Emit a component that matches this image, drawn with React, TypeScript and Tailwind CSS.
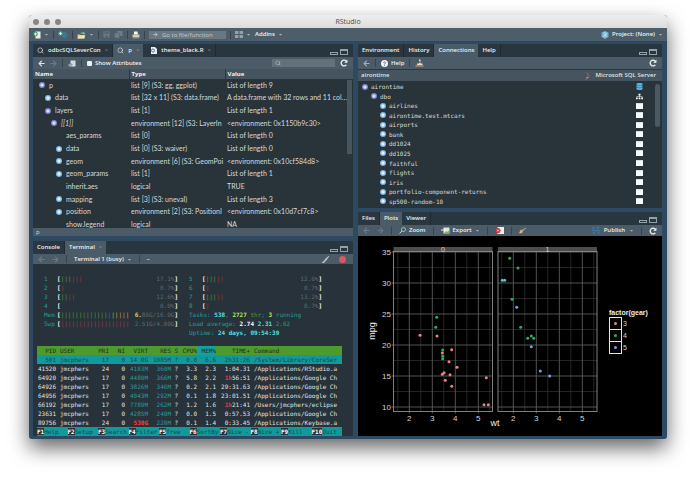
import React from "react";
import { FaArrowLeft, FaArrowRight, FaBroom, FaCaretDown, FaDatabase, FaSitemap } from "react-icons/fa";
import { FiSearch } from "react-icons/fi";

type ObjectRow = { name: string; level: number; type: string; value: string; icon?: "open" | "closed"; italic?: boolean };

const objectRows: ObjectRow[] = [
  { name: "p", level: 0, type: "list [9] (S3: gg, ggplot)", value: "List of length 9", icon: "open" },
  { name: "data", level: 1, type: "list [32 x 11] (S3: data.frame)", value: "A data.frame with 32 rows and 11 col…", icon: "closed" },
  { name: "layers", level: 1, type: "list [1]", value: "List of length 1", icon: "open" },
  { name: "[[1]]", level: 2, type: "environment [12] (S3: LayerIn", value: "<environment: 0x1150b9c30>", icon: "open", italic: true },
  { name: "aes_params", level: 3, type: "list [0]", value: "List of length 0" },
  { name: "data", level: 3, type: "list [0] (S3: waiver)", value: "List of length 0", icon: "closed" },
  { name: "geom", level: 3, type: "environment [6] (S3: GeomPoi", value: "<environment: 0x10cf584d8>", icon: "closed" },
  { name: "geom_params", level: 3, type: "list [1]", value: "List of length 1", icon: "closed" },
  { name: "inherit.aes", level: 3, type: "logical", value: "TRUE" },
  { name: "mapping", level: 3, type: "list [3] (S3: uneval)", value: "List of length 3", icon: "closed" },
  { name: "position", level: 3, type: "environment [2] (S3: PositionI", value: "<environment: 0x10d7cf7c8>", icon: "closed" },
  { name: "show.legend", level: 3, type: "logical", value: "NA" },
];

const indents = ["pl-[6px]", "pl-[12px]", "pl-[18px]", "pl-[23px]"];

const tables = [
  "airlines", "airontime.test.mtcars", "airports", "bank", "dd1024", "dd1025",
  "faithful", "flights", "iris", "portfolio-component-returns", "sp500-random-10",
];

const processes = [
  ["41520", "24", "4183M", "360M", "3.3", "2.3", "", "1:04.31", "/Applications/RStudio.a"],
  ["64920", "17", "4480M", "366M", "5.8", "2.2", "1h", "56:51", "/Applications/Google Ch"],
  ["64926", "17", "3826M", "346M", "0.2", "2.1", "", "29:31.63", "/Applications/Google Ch"],
  ["64956", "17", "4043M", "292M", "0.1", "1.8", "", "23:01.51", "/Applications/Google Ch"],
  ["66192", "17", "7789M", "262M", "1.2", "1.6", "1h", "21:41", "/Users/jmcphers/eclipse"],
  ["23631", "17", "4285M", "240M", "0.0", "1.5", "", "0:57.53", "/Applications/Google Ch"],
  ["89756", "24", "530G", "228M", "0.1", "1.4", "", "0:33.45", "/Applications/Keybase.a"],
];

const fkeys = [
  ["F1", "Help"], ["F2", "Setup"], ["F3", "Search"], ["F4", "Filter"], ["F5", "Tree"],
  ["F6", "SortBy"], ["F7", "Nice -"], ["F8", "Nice +"], ["F9", "Kill"], ["F10", "Quit"],
];

const RED = "#f08080";
const GREEN = "#2fae5f";
const BLUE = "#7f9bea";
const TEAL = "#5fc3c6";

const points: [number, number, string][] = [
  [62, 99.3, RED], [79, 100, RED], [93.7, 113.7, RED], [84.7, 114, GREEN], [84.3, 117, RED],
  [84.7, 120.3, GREEN], [84.7, 122.7, GREEN], [91, 125.7, RED], [99, 131.3, RED], [84.3, 138.3, RED],
  [86, 136.7, RED], [92, 138.7, RED], [87.3, 144.3, RED], [93.7, 150.3, RED], [128.3, 141.7, RED],
  [126, 168.7, RED], [130.3, 168.7, RED], [78.7, 81.3, GREEN], [77.7, 91.3, GREEN],
  [151.7, 22.3, GREEN], [160, 32, GREEN], [154, 63.3, GREEN], [162.7, 91.3, GREEN],
  [169.7, 102.3, GREEN], [173.3, 100, GREEN], [175.7, 102.3, GREEN], [144.3, 44.3, TEAL],
  [146.7, 44.3, TEAL], [158.7, 71.3, BLUE], [173.3, 110.7, BLUE], [182.3, 135, BLUE], [191.7, 140, BLUE],
];

function Sep() {
  return <span className="h-[8px] w-px shrink-0 bg-[#35434e]" />;
}

function Caret() {
  return <FaCaretDown className="size-[5px] shrink-0 text-[#aab5bb]" />;
}

function Disclosure({ open }: { open: boolean }) {
  return (
    <svg viewBox="0 0 12 12" className="size-[6px] shrink-0">
      <circle cx="6" cy="6" r="6" fill={open ? "#7b86cf" : "#7fb4dc"} />
      <circle cx="6" cy="6" r="4" fill={open ? "#a9b1e6" : "#b5d8ef"} />
      <path d={open ? "M3 5h6L6 9z" : "M5 3v6l4-3z"} fill="#fff" />
    </svg>
  );
}

function Refresh() {
  return (
    <button aria-label="Refresh" className="shrink-0">
      <svg viewBox="0 0 14 14" className="size-[8px]" fill="none" stroke="#edf0f1" strokeWidth="2.4">
        <path d="M11 10.2A5 5 0 1 1 10.6 3.5" />
        <path d="M13 0.8V6.4H7.4z" fill="#edf0f1" stroke="none" />
      </svg>
    </button>
  );
}

function PaneButtons() {
  return (
    <div className="ml-auto flex items-end gap-[2px] self-end pr-[5px] pb-[2px]">
      <button aria-label="Minimize" className="h-[3px] w-[8px] border border-[#94a1a8]" />
      <button aria-label="Maximize" className="h-[6px] w-[8px] border border-t-2 border-[#94a1a8]" />
    </div>
  );
}

function Tab({ children, active }: { children: React.ReactNode; active?: boolean }) {
  return (
    <button
      role="tab"
      aria-selected={!!active}
      className={
        "flex h-full items-center gap-[4px] whitespace-nowrap px-[4px] font-semibold text-[#eef1f2] " +
        (active ? "bg-[#4b5b67]" : "border-r border-[#1f2a32] bg-[#2a3741]")
      }
    >
      {children}
    </button>
  );
}

function TabBar({ children }: { children: React.ReactNode }) {
  return (
    <div role="tablist" className="flex h-[13px] shrink-0 items-stretch bg-[#283640]">
      {children}
      <PaneButtons />
    </div>
  );
}

function Toolbar({ children }: { children: React.ReactNode }) {
  return (
    <div className="flex h-[12px] shrink-0 items-center gap-[5px] bg-[#4b5b67] px-[5px] font-semibold text-[#eef1f2]">
      {children}
    </div>
  );
}

function MainToolbar() {
  return (
    <div className="flex h-[13px] items-center gap-[4px] bg-[#4d5d69] px-[4px] text-[#eef1f2]">
      <button aria-label="New file" className="flex items-center gap-[3px]">
        <svg viewBox="0 0 16 16" className="size-[8px]">
          <path d="M5 1h10v14H5z" fill="#e8eeee" />
          <circle cx="5" cy="6" r="4.5" fill="#3f9a6c" />
          <path d="M5 3v6M2 6h6" stroke="#fff" strokeWidth="1.6" />
        </svg>
        <Caret />
      </button>
      <Sep />
      <button aria-label="New project">
        <svg viewBox="0 0 20 16" className="h-[8px] w-[10px]">
          <path d="M8 4l6-2 5 3v6l-6 4-5-3z" fill="#3d7893" />
          <circle cx="5" cy="5" r="4.5" fill="#45a69a" />
          <path d="M5 2v6M2 5h6" stroke="#e9f5f2" strokeWidth="1.5" />
        </svg>
      </button>
      <Sep />
      <button aria-label="Open file" className="flex items-center gap-[3px]">
        <svg viewBox="0 0 18 16" className="h-[8px] w-[9px]">
          <path d="M1 7h5l1 1h8v7H1z" fill="#d9c68c" />
          <path d="M4 9h13l-3 6H1z" fill="#efe3b8" />
          <path d="M7 6c1-4 4-4 6-3V1l4 4-4 3V6c-2-1-4-1-6 0z" fill="#7fbb7c" />
        </svg>
        <Caret />
      </button>
      <Sep />
      <button aria-label="Save">
        <svg viewBox="0 0 14 14" className="size-[7px]" fill="#6d7c87"><path d="M1 1h12v12H1z" /><path d="M3 2h8v4H3zM4 9h6v4H4z" fill="#53636f" /></svg>
      </button>
      <button aria-label="Save all">
        <svg viewBox="0 0 18 14" className="h-[7px] w-[9px]" fill="#6d7c87"><path d="M6 0h11v10H6z" /><path d="M1 4h10v10H1z" stroke="#53636f" /></svg>
      </button>
      <Sep />
      <button aria-label="Print">
        <svg viewBox="0 0 16 16" className="size-[8px]">
          <path d="M4 1h7l1 6H4z" fill="#fbf8e4" />
          <path d="M1 7h14v6H1z" fill="#cfcdb4" />
          <path d="M2 13h12v2H2z" fill="#8d9790" />
        </svg>
      </button>
      <Sep />
      <label className="flex h-[8px] w-[77px] items-center gap-[4px] bg-[#687782] pl-[4px]">
        <FaArrowRight className="size-[5px] shrink-0 text-[#b5bfc5]" />
        <input
          aria-label="Go to file/function"
          placeholder="Go to file/function"
          className="w-full min-w-0 bg-transparent leading-[8px] placeholder:text-[#c3cbd0]"
        />
      </label>
      <Sep />
      <button aria-label="Pane layout" className="flex items-center gap-[3px]">
        <svg viewBox="0 0 14 12" className="h-[7px] w-[8px]" fill="#93a1aa">
          <path d="M0 0h6v5H0zM8 0h6v5H8zM0 7h6v5H0zM8 7h6v5H8z" />
        </svg>
        <Caret />
      </button>
      <button className="flex items-center gap-[3px] font-semibold">
        Addins <Caret />
      </button>
      <button className="ml-auto flex items-center gap-[3px] whitespace-nowrap font-semibold">
        <svg viewBox="0 0 16 16" className="size-[8px]">
          <path d="M8 0l7 3v9l-7 4-7-4V3z" fill="#6fb3cf" />
          <path d="M5 4h4a2 2 0 0 1 0 4H6v4M8 8l3 4" fill="none" stroke="#e4f2f7" strokeWidth="1.5" />
        </svg>
        Project: (None) <Caret />
      </button>
    </div>
  );
}

function SourcePane() {
  return (
    <section className="flex flex-col bg-[#29333a]">
      <TabBar>
        <Tab>
          <FiSearch className="size-[7px]" /> odbcSQLSeverCon <span className="text-[#61707a]">×</span>
        </Tab>
        <Tab active>
          <FiSearch className="size-[7px]" /> p <span className="text-[#7a8892]">×</span>
        </Tab>
        <Tab>
          <svg viewBox="0 0 12 14" className="ml-[4px] h-[7px] w-[6px]">
            <path d="M0 0h8l4 4v10H0z" fill="#e8edf2" />
            <circle cx="4" cy="7" r="3" fill="none" stroke="#4b77b8" strokeWidth="2" />
          </svg>
          theme_black.R <span className="text-[#61707a]">×</span>
        </Tab>
      </TabBar>
      <Toolbar>
        <button aria-label="Back"><FaArrowLeft className="size-[7px] text-[#dde3e6]" /></button>
        <button aria-label="Forward"><FaArrowRight className="size-[7px] text-[#6b7a85]" /></button>
        <Sep />
        <button aria-label="Show in new window">
          <svg viewBox="0 0 16 14" className="h-[7px] w-[8px]">
            <path d="M5 1h10v12H5z" fill="#d5dbde" />
            <path d="M1 13V8h4V5l5 4-5 4z" fill="#93a2ad" />
          </svg>
        </button>
        <Sep />
        <label className="flex items-center gap-[3px] whitespace-nowrap">
          <input type="checkbox" className="size-[5px] appearance-none rounded-[1px] bg-[#eef1f3]" />
          Show Attributes
        </label>
        <label className="ml-auto flex h-[8px] w-[63px] items-center bg-[#63717b] pl-[3px]">
          <FiSearch className="size-[6px] shrink-0 text-[#c3cbd0]" />
          <input aria-label="Search" className="w-full min-w-0 bg-transparent leading-[8px]" />
        </label>
        <Refresh />
      </Toolbar>
      <div className="relative h-[159px] overflow-hidden">
        <table className="h-[162px] w-full table-fixed border-collapse text-left font-['Lato',sans-serif] text-[7px] text-[#d5dadc]">
          <colgroup>
            <col className="w-[30%]" />
            <col className="w-[30%]" />
            <col />
          </colgroup>
          <thead className="bg-[#45545f] font-['Open_Sans',sans-serif] text-[6px] text-[#eef1f2]">
            <tr className="h-[10px] leading-[10px]">
              <th className="border-r border-[#2b3841] pl-[2px]">Name</th>
              <th className="border-r border-[#2b3841] pl-[2px]">Type</th>
              <th className="pl-[2px]">Value</th>
            </tr>
          </thead>
          <tbody>
            {objectRows.map((r, i) => (
              <tr key={i}>
                <td>
                  <div className={"flex items-center gap-[4px] " + indents[r.level]}>
                    {r.icon ? <Disclosure open={r.icon === "open"} /> : <span className="w-[6px]" />}
                    <span className={r.italic ? "italic" : ""}>{r.name}</span>
                  </div>
                </td>
                <td className="overflow-hidden pl-[2px] whitespace-nowrap">{r.type}</td>
                <td className="overflow-hidden pl-[2px] whitespace-nowrap">{r.value}</td>
              </tr>
            ))}
          </tbody>
        </table>
        <span className="absolute top-[11px] right-px h-[74px] w-[5px] bg-[#47555f]" />
      </div>
      <footer className="h-[8px] bg-[#4b5b67] pl-[3px] leading-[8px] text-[#d5dadc]">p</footer>
    </section>
  );
}

function Meter({ label, value, children }: { label: string; value: React.ReactNode; children?: React.ReactNode }) {
  return (
    <div className="flex">
      <span className="w-[13px] shrink-0 text-[#2a9a9a]">{label}</span>
      <b className="text-white">[</b>
      {children}
      <span className="ml-auto text-[#5d6a70]">{value}</span>
      <b className="text-white">]</b>
    </div>
  );
}

function Htop() {
  const red = "text-[#b3333a]";
  const green = "text-[#5b9a3b]";
  return (
    <div className="bg-[#27323a] pt-[10px] pr-[11px] pl-[4px] font-['DejaVu_Sans_Mono',monospace] text-[6px] leading-[9px] whitespace-pre">
      <div className="grid h-[72px] grid-cols-[134fr_133fr] gap-x-[11px] pr-[20px] pl-[7px]">
        <div>
          <Meter label="1" value="17.1%"><span className={green}>|||</span><span className={red}>|||</span></Meter>
          <Meter label="2" value="0.7%"><span className={red}>|</span></Meter>
          <Meter label="3" value="12.6%"><span className={green}>||</span><span className={red}>||</span></Meter>
          <Meter label="4" value="0.0%" />
          <Meter label="Mem" value={<><b className="text-[#e3c95a]">6.</b>86G/16.0G</>}>
            <span className={green}>|||||||||||||</span>
            <span className="text-[#3f6fb0]">|</span>
            <span className="text-[#c9a63a]">|||||</span>
          </Meter>
          <Meter label="Swp" value="2.51G/4.00G"><span className={red}>|||||||||||||||||||</span></Meter>
        </div>
        <div className="text-[#2a9a9a]">
          <Meter label="5" value="12.6%"><span className={green}>|||</span><span className={red}>||</span></Meter>
          <Meter label="6" value="0.7%"><span className={red}>|</span></Meter>
          <Meter label="7" value="13.2%"><span className={green}>|||</span><span className={red}>||</span></Meter>
          <Meter label="8" value="0.7%"><span className={red}>|</span></Meter>
          <p>Tasks: <b className="text-[#4fe0e0]">538</b>, <b className="text-[#b5e853]">2727</b> <span className={green}>thr</span>; <b className="text-[#b5e853]">3</b> running</p>
          <p>Load average: <b className="text-white">2.74</b> <b className="text-[#4fe0e0]">2.31</b> 2.62</p>
          <p>Uptime: <b className="text-[#4fe0e0]">24 days, 09:54:39</b></p>
        </div>
      </div>
      <table className="w-full table-fixed border-collapse text-right text-[#e0e4e4]">
        <colgroup>
          <col className="w-[19px]" />
          <col className="w-[34px]" />
          <col className="w-[19px]" />
          <col className="w-[16px]" />
          <col className="w-[23px]" />
          <col className="w-[23px]" />
          <col className="w-[7px]" />
          <col className="w-[19px]" />
          <col className="w-[19px]" />
          <col className="w-[34px]" />
          <col />
        </colgroup>
        <thead className="bg-[#4f9a2c] text-[#1c2e1c]">
          <tr className="h-[9px] [&>th]:font-normal">
            <th>PID</th>
            <th className="pl-[4px] text-left">USER</th>
            <th>PRI</th>
            <th>NI</th>
            <th>VIRT</th>
            <th>RES</th>
            <th>S</th>
            <th>CPU%</th>
            <th className="bg-[#14a0a0]">MEM%</th>
            <th>TIME+</th>
            <th className="pl-[4px] text-left">Command</th>
          </tr>
        </thead>
        <tbody>
          <tr className="h-[9px] bg-[#12999b] text-[#17484f]">
            <td>501</td>
            <td className="pl-[4px] text-left">jmcphers</td>
            <td>17</td>
            <td>0</td>
            <td>14.0G</td>
            <td>1085M</td>
            <td>?</td>
            <td>0.0</td>
            <td>6.6</td>
            <td>2h31:26</td>
            <td className="overflow-hidden pl-[4px] text-left">/System/Library/CoreSer</td>
          </tr>
          {processes.map(([pid, pri, virt, res, cpu, mem, hours, time, command]) => (
            <tr key={pid} className="h-[9px]">
              <td>{pid}</td>
              <td className="pl-[4px] text-left">jmcphers</td>
              <td>{pri}</td>
              <td>0</td>
              <td className={virt === "530G" ? "font-bold text-[#ff3b3b]" : "text-[#2a9a9a]"}>{virt}</td>
              <td className="text-[#2a9a9a]">{res}</td>
              <td>?</td>
              <td>{cpu}</td>
              <td>{mem}</td>
              <td><b className="text-[#e8364a]">{hours}</b>{time}</td>
              <td className="overflow-hidden pl-[4px] text-left">{command}</td>
            </tr>
          ))}
        </tbody>
      </table>
      <div className="grid grid-cols-10 bg-[#12999b] text-[#17484f]">
        {fkeys.map(([key, label]) => (
          <span key={key}><b className="bg-[#27323a] text-white">{key}</b>{label}</span>
        ))}
      </div>
    </div>
  );
}

function TerminalPane() {
  return (
    <section className="flex flex-col bg-[#27323a]">
      <TabBar>
        <Tab>Console</Tab>
        <Tab active>Terminal <span className="text-[#7a8892]">×</span></Tab>
      </TabBar>
      <div className="flex h-[10px] items-center gap-[7px] bg-[#4b5b67] px-[5px] font-semibold whitespace-nowrap text-[#eef1f2]">
        <button aria-label="Previous terminal"><FaArrowLeft className="size-[7px] text-[#6b7a85]" /></button>
        <button aria-label="Next terminal"><FaArrowRight className="size-[7px] text-[#6b7a85]" /></button>
        <Sep />
        <button className="flex items-center gap-[3px]">Terminal 1 (busy) <Caret /></button>
        <Sep />
        <span>–</span>
        <button aria-label="Clear terminal" className="ml-auto">
          <svg viewBox="0 0 16 14" className="h-[7px] w-[9px]">
            <path d="M15 0L7 7l2 2z" fill="#cfd6da" stroke="#cfd6da" />
            <path d="M7 7l2 2-4 5H0z" fill="#b6c0c6" />
          </svg>
        </button>
        <button aria-label="Stop" className="mx-[2px] size-[7px] rounded-full bg-[#dd5560]" />
      </div>
      <Htop />
    </section>
  );
}

function ConnectionsPane() {
  return (
    <section className="flex h-[164px] flex-col bg-[#29333a]">
      <TabBar>
        <Tab>Environment</Tab>
        <Tab>History</Tab>
        <Tab active>Connections</Tab>
        <Tab>Help</Tab>
      </TabBar>
      <Toolbar>
        <button aria-label="Back"><FaArrowLeft className="size-[7px] text-[#9bb0bd]" /></button>
        <Sep />
        <button className="flex items-center gap-[3px]">
          <svg viewBox="0 0 14 14" className="size-[7px]">
            <circle cx="7" cy="7" r="7" fill="#f3f6f7" />
            <path d="M5 5.5a2 2 0 1 1 2 2.2V9M7 10v1.6" fill="none" stroke="#4b6a85" strokeWidth="1.6" />
          </svg>
          Help
        </button>
        <Sep />
        <button aria-label="Disconnect">
          <svg viewBox="0 0 18 16" className="h-[8px] w-[9px]">
            <path d="M1 13h16v2H1z" fill="#e9b04d" />
            <path d="M8 1h3v8h4v3H4V9h4z" fill="#e7e2d8" />
            <path d="M8 4h3v4H8z" fill="#d2553f" />
          </svg>
        </button>
        <span className="ml-auto" />
        <Refresh />
      </Toolbar>
      <div className="flex h-[12px] shrink-0 items-center border-t border-[#2b3841] bg-[#45545f] pr-[6px] pl-[3px] font-semibold text-[#dfe4e6]">
        <span>airontime</span>
        <span className="ml-auto flex items-center gap-[5px]">
          <svg viewBox="0 0 10 16" className="h-[8px] w-[5px]" fill="none" stroke="#b5626c" strokeWidth="2">
            <path d="M3 1c6 3 0 5 5 8-1 4-4 5-7 6" />
            <path d="M2 11h4" stroke="#8e9aa3" />
          </svg>
          Microsoft SQL Server
        </span>
      </div>
      <div className="flex min-h-0 flex-1 pt-px pb-[2px]">
        <ul className="flex flex-1 flex-col font-['DejaVu_Sans_Mono',monospace] text-[6px] leading-[9px] text-[#d5dadc]">
          <li className="flex flex-1 items-center gap-[3px] pr-[8px] pl-[4px]">
            <Disclosure open />airontime<FaDatabase className="ml-auto size-[7px] text-[#55b7dd]" />
          </li>
          <li className="flex flex-1 items-center gap-[3px] pr-[8px] pl-[13px]">
            <Disclosure open />dbo<FaSitemap className="ml-auto size-[7px] text-white" />
          </li>
          {tables.map((name) => (
            <li key={name} className="flex flex-1 items-center gap-[3px] pr-[8px] pl-[22px]">
              <Disclosure open={false} />{name}
              <svg viewBox="0 0 14 12" className="ml-auto h-[6px] w-[7px]">
                <path d="M0 0h14v12H0z" fill="#f6f9fa" />
                <path d="M0 0h14v2H0z" fill="#d4e0e5" />
              </svg>
            </li>
          ))}
        </ul>
        <span className="mt-[2px] mr-[2px] ml-[4px] h-[43px] w-[5px] rounded-sm bg-[#4b5963]" />
      </div>
    </section>
  );
}

function Plot() {
  const facets = [
    { label: "0", x: 35.5, two: 51.3 },
    { label: "1", x: 140, two: 155.3 },
  ];
  return (
    <svg viewBox="0 0 304 200" className="block w-full bg-black font-['Liberation_Sans',sans-serif]" fill="#d5d5d5">
      {facets.map((f) => (
        <g key={f.label}>
          <rect x={f.x} y="11" width="99" height="4.5" fill="#4d4d4d" />
          <g stroke="#343434" strokeWidth="0.7">
            {[31.5, 62.5, 93.5, 124.5, 155.5].map((y) => <path key={y} d={`M${f.x} ${y}h99`} />)}
            {[-0.5, 0.5, 1.5, 2.5, 3.5].map((n) => <path key={n} d={`M${f.two + n * 23} 15.5v160`} />)}
          </g>
          <g stroke="#5c5c5c" strokeWidth="0.9">
            {[16, 47, 78, 109, 140, 171].map((y) => <path key={y} d={`M${f.x} ${y}h99`} />)}
            {[0, 1, 2, 3].map((n) => <path key={n} d={`M${f.two + n * 23} 15.5v162`} />)}
          </g>
          <rect x={f.x} y="15.5" width="99" height="160" fill="none" stroke="#8e8e8e" strokeWidth="0.9" />
          <text x={f.x + 49.5} y="16" fontSize="7" textAnchor="middle">{f.label}</text>
          {[2, 3, 4, 5].map((n) => (
            <text key={n} x={f.two + (n - 2) * 23} y="184.5" fontSize="8" textAnchor="middle">{n}</text>
          ))}
        </g>
      ))}
      {[35, 30, 25, 20, 15, 10].map((n, i) => (
        <g key={n}>
          <text x="33" y={18.5 + i * 31} fontSize="8" textAnchor="end">{n}</text>
          <path d={`M33.5 ${16 + i * 31}h2`} stroke="#999" strokeWidth="0.7" />
        </g>
      ))}
      {points.map(([x, y, color], i) => <circle key={i} cx={x} cy={y} r="1.5" fill={color} />)}
      <text x="137" y="190" fontSize="9" textAnchor="middle" fill="#eee">wt</text>
      <text transform="translate(17 95) rotate(-90)" fontSize="9" textAnchor="middle" fill="#eee">mpg</text>
      <text x="251" y="78.5" fontSize="7" fontWeight="bold" fill="#eee">factor(gear)</text>
      {[RED, GREEN, BLUE].map((color, i) => (
        <g key={color}>
          <rect x="251.5" y={81.5 + i * 12} width="12" height="12" fill="none" stroke="#e5e5e5" />
          <circle cx="257.5" cy={87.5 + i * 12} r="1.5" fill={color} />
          <text x="265" y={90 + i * 12} fontSize="7">{i + 3}</text>
        </g>
      ))}
    </svg>
  );
}

function PlotsPane() {
  return (
    <section className="flex flex-1 flex-col bg-black">
      <TabBar>
        <Tab>Files</Tab>
        <Tab active>Plots</Tab>
        <Tab>Viewer</Tab>
      </TabBar>
      <div className="flex h-[11px] items-center gap-[7px] bg-[#4b5b67] px-[5px] font-semibold text-[#eef1f2]">
        <button aria-label="Previous plot"><FaArrowLeft className="size-[7px] text-[#6b7a85]" /></button>
        <button aria-label="Next plot"><FaArrowRight className="size-[7px] text-[#6b7a85]" /></button>
        <Sep />
        <button className="flex items-center gap-[3px]">
          <svg viewBox="0 0 14 14" className="size-[7px]" fill="none">
            <circle cx="9" cy="5" r="4" stroke="#8fc4b4" strokeWidth="2" />
            <path d="M6 8l-5 5" stroke="#cdd6da" strokeWidth="2" />
          </svg>
          Zoom
        </button>
        <Sep />
        <button className="flex items-center gap-[3px]">
          <svg viewBox="0 0 18 14" className="h-[7px] w-[9px]">
            <path d="M5 1h12v12H5z" fill="#d9e4da" />
            <path d="M6 13l4-5 3 2 4-4v7z" fill="#87a85f" />
            <path d="M0 5h6V2l5 4-5 4V7H0z" fill="#f3f3df" />
          </svg>
          Export <Caret />
        </button>
        <Sep />
        <button aria-label="Remove plot">
          <svg viewBox="0 0 18 14" className="h-[7px] w-[9px]">
            <path d="M5 0h13v14H5z" fill="#eef1f2" />
            <circle cx="6" cy="7" r="5" fill="#c92a2e" />
            <path d="M4 5l4 4M8 5L4 9" stroke="#fff" strokeWidth="1.5" />
          </svg>
        </button>
        <Sep />
        <button aria-label="Clear plots"><FaBroom className="size-[7px] text-[#dcb96a]" /></button>
        <button className="ml-auto flex items-center gap-[4px]">
          <svg viewBox="0 0 16 14" className="h-[7px] w-[8px]" fill="none" stroke="#3281b4" strokeWidth="2.4">
            <path d="M2 5a5.5 5.5 0 0 1 11-1M14 9a5.5 5.5 0 0 1-11 1M1 7h14" />
          </svg>
          Publish <Caret />
        </button>
        <Sep />
        <Refresh />
      </div>
      <Plot />
    </section>
  );
}

export default function App() {
  return (
    <main className="min-h-screen bg-white px-[29px] pt-[15px] pb-[44px] font-['Open_Sans',sans-serif] text-[6px] leading-[9px]">
      <div className="overflow-hidden rounded-[3px] bg-[#2e4a62] shadow-[0_9px_20px_rgba(0,0,0,0.6)]">
        <header className="relative flex h-[13px] items-center justify-center bg-gradient-to-b from-[#eeeeee] to-[#dcdcdc]">
          <div className="absolute left-[4px] flex gap-[5px]">
            <button aria-label="Close" className="size-[6px] rounded-full bg-[#858585]" />
            <button aria-label="Minimize window" className="size-[6px] rounded-full bg-[#858585]" />
            <button aria-label="Zoom window" className="size-[6px] rounded-full bg-[#858585]" />
          </div>
          <h1 className="text-[7px] text-[#4c4c4c]">RStudio</h1>
        </header>
        <MainToolbar />
        <div className="grid grid-cols-[320fr_304fr] gap-[5px] pt-[3px] pr-[5px] pb-[3px] pl-[4px]">
          <div className="flex min-w-0 flex-col gap-[5px]">
            <SourcePane />
            <TerminalPane />
          </div>
          <div className="flex min-w-0 flex-col gap-[4px]">
            <ConnectionsPane />
            <PlotsPane />
          </div>
        </div>
      </div>
    </main>
  );
}
